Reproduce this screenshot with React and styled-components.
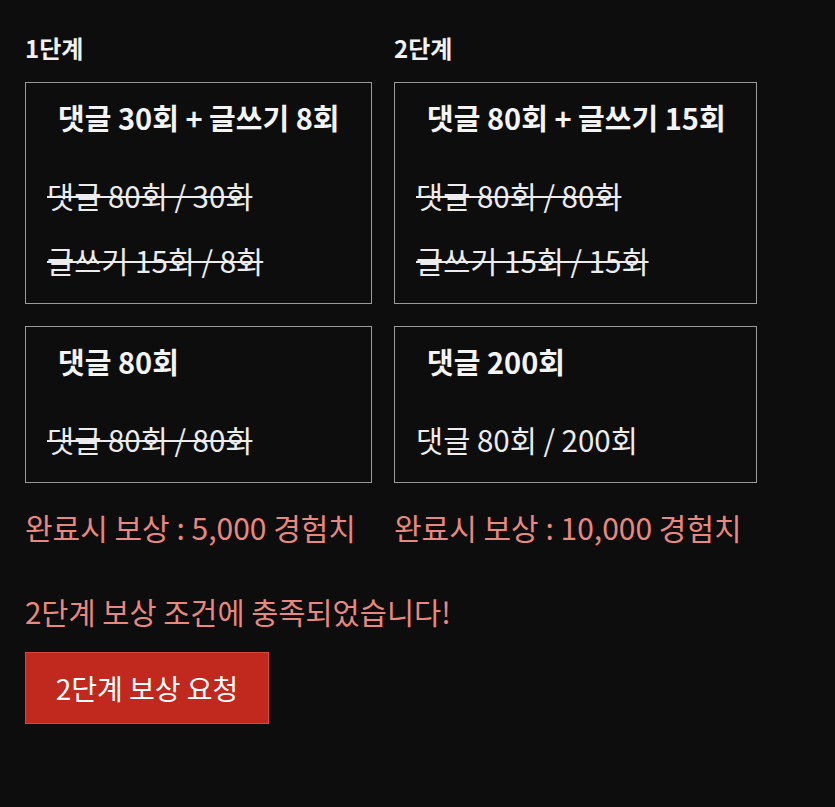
import React from "react";
import styled, { createGlobalStyle } from "styled-components";

const GlobalStyle = createGlobalStyle`
  html, body {
    margin: 0;
    padding: 0;
    background: #0d0d0d;
  }
  body {
    font-family: "Noto Sans CJK KR", "Noto Sans", sans-serif;
    color: #eeeeee;
  }
`;

const Page = styled.div`
  min-height: 807px;
  padding: 28px 25px 40px;
  box-sizing: border-box;
  background: #0d0d0d;
`;

const Stages = styled.div`
  display: flex;
  gap: 22px;
  align-items: flex-start;
`;

const Column = styled.section`
  display: flex;
  flex-direction: column;
  width: ${(p) => p.$width}px;
`;

const StageLabel = styled.h3`
  margin: 0 0 14px;
  font-size: 24px;
  font-weight: 700;
  line-height: 40px;
  color: #f2f2f2;
`;

const Card = styled.div`
  border: 1px solid #9a9a9a;
  padding: 12px 21px 21px;
  display: flex;
  flex-direction: column;
  gap: 21px;
  & + & {
    margin-top: 22px;
  }
`;

const CardTitle = styled.div`
  padding: 0 11px;
  font-size: 29px;
  font-weight: 700;
  line-height: 44px;
  margin-bottom: 13px;
  color: #f4f4f4;
  white-space: nowrap;
`;

const Progress = styled.div`
  font-size: 29.5px;
  font-weight: 400;
  line-height: 44px;
  color: #ececec;
  white-space: nowrap;
  text-decoration: ${(p) => (p.$done ? "line-through" : "none")};
  text-decoration-thickness: 2px;
`;

const Reward = styled.p`
  margin: 23px 0 0;
  font-size: 30px;
  line-height: 42px;
  color: #e9887e;
  white-space: nowrap;
`;

const Notice = styled.p`
  margin: 42px 0 0;
  font-size: 29.5px;
  line-height: 42px;
  color: #e9887e;
`;

const RequestButton = styled.button`
  margin-top: 20px;
  width: 244px;
  height: 72px;
  border: 1px solid #d6463a;
  background: #c1281e;
  color: #ffffff;
  font-family: "Noto Sans CJK KR", "Noto Sans", sans-serif;
  font-size: 28px;
  cursor: pointer;
`;

const stages = [
  {
    label: "1단계",
    width: 347,
    reward: "완료시 보상 : 5,000 경험치",
    cards: [
      {
        title: "댓글 30회 + 글쓰기 8회",
        rows: [
          { text: "댓글 80회 / 30회", done: true },
          { text: "글쓰기 15회 / 8회", done: true },
        ],
      },
      {
        title: "댓글 80회",
        rows: [{ text: "댓글 80회 / 80회", done: true }],
      },
    ],
  },
  {
    label: "2단계",
    width: 363,
    reward: "완료시 보상 : 10,000 경험치",
    cards: [
      {
        title: "댓글 80회 + 글쓰기 15회",
        rows: [
          { text: "댓글 80회 / 80회", done: true },
          { text: "글쓰기 15회 / 15회", done: true },
        ],
      },
      {
        title: "댓글 200회",
        rows: [{ text: "댓글 80회 / 200회", done: false }],
      },
    ],
  },
];

export default function App() {
  return (
    <Page>
      <GlobalStyle />
      <Stages>
        {stages.map((stage) => (
          <Column key={stage.label} $width={stage.width}>
            <StageLabel>{stage.label}</StageLabel>
            {stage.cards.map((card) => (
              <Card key={card.title}>
                <CardTitle>{card.title}</CardTitle>
                {card.rows.map((row) => (
                  <Progress key={row.text} $done={row.done}>
                    {row.text}
                  </Progress>
                ))}
              </Card>
            ))}
            <Reward>{stage.reward}</Reward>
          </Column>
        ))}
      </Stages>
      <Notice>2단계 보상 조건에 충족되었습니다!</Notice>
      <RequestButton type="button">2단계 보상 요청</RequestButton>
    </Page>
  );
}
